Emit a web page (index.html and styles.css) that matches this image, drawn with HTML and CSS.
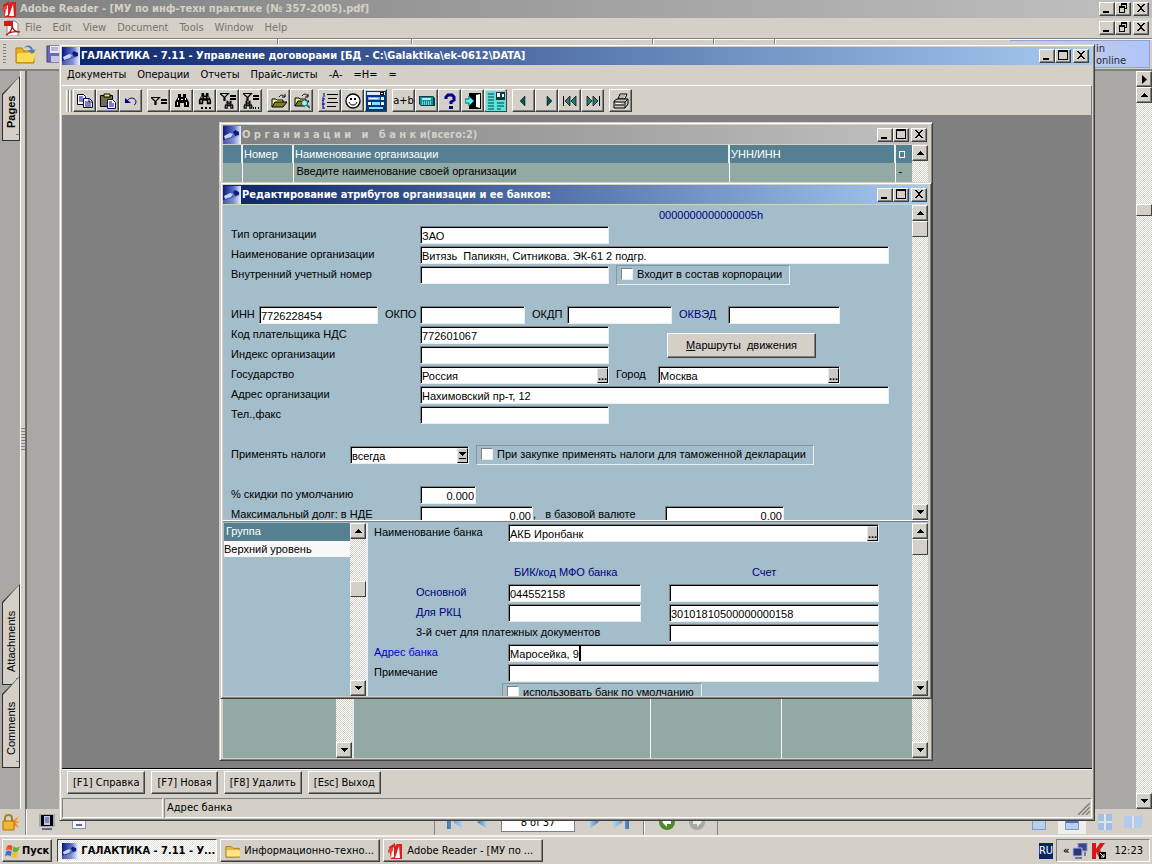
FILE: index.html
```html
<!DOCTYPE html>
<html lang="ru">
<head>
<meta charset="utf-8">
<title>ГАЛАКТИКА - 7.11 - Управление договорами</title>
<link rel="stylesheet" href="styles.css">
</head>
<body>
<svg class="sprite" aria-hidden="true">
    <defs>
        <linearGradient id="gLogo" x1="0" x2="1" y1="0" y2="0"><stop offset="0" stop-color="#0a1a80"/><stop offset=".6" stop-color="#5a70c8"/><stop offset="1" stop-color="#e8eeff"/></linearGradient>
        <linearGradient id="gNav" x1="0" x2="1"><stop offset="0" stop-color="#3b78b8"/><stop offset="1" stop-color="#b8d8f0"/></linearGradient>
    </defs>
    <symbol id="i-logo" viewBox="0 0 18 18"><rect width="18" height="18" fill="url(#gLogo)"/><path d="M1 10l6-3 3 1-2 3-6 2z" fill="#c8d4f8"/><path d="M10 6l2-2 4 2v3l-4 1z" fill="#101c78"/><path d="M0 14l18-4v8H0z" fill="#fff" opacity=".25"/></symbol>
    <symbol id="i-adobe" viewBox="0 0 16 16"><path d="M1 4l6-4v3l2-2h5v15H3z" fill="#d8201c"/><path d="M6 4v10l-3 1 1-9zM11 3L7 15h5z" fill="#fff"/><path d="M0 7l5-3v4l-5 2z" fill="#f04038"/></symbol>
    <symbol id="i-pdf" viewBox="0 0 16 16"><path d="M3 1h8l3 3v12H3z" fill="#fff" stroke="#888"/><path d="M0 1h9v5H0z" fill="#d01818"/><path d="M2 15c4-2 6-6 6-9 1 4 4 6 8 6-5-1-10 0-14 3z" fill="none" stroke="#c01010" stroke-width="1.3"/></symbol>
    <symbol id="i-min" viewBox="0 0 12 10"><path d="M2 8h6v2H2z"/></symbol>
    <symbol id="i-max" viewBox="0 0 12 10"><path d="M1 0h10v10H1zM2 2v7h8V2z" fill-rule="evenodd"/></symbol>
    <symbol id="i-restore" viewBox="0 0 12 10"><path d="M4 0h6v6H8V5h1V2H5v1H4zM2 3h6v7H2zM3 5v4h4V5z" fill-rule="evenodd"/></symbol>
    <symbol id="i-close" viewBox="0 0 12 10"><path d="M2 1h2v1h1v1h2V2h1V1h2v1H9v1H8v1H7v2h1v1h1v1h1v1H8V8H7V7H5v1H4v1H2V8h1V7h1V6h1V4H4V3H3V2H2z"/></symbol>
    <symbol id="i-up" viewBox="0 0 7 4"><path d="M3 0h1v1h1v1h1v1h1v1H0V3h1V2h1V1h1z"/></symbol>
    <symbol id="i-down" viewBox="0 0 7 4"><path d="M0 0h7v1H6v1H5v1H4v1H3V3H2V2H1V1H0z"/></symbol>
    <symbol id="i-drop" viewBox="0 0 7 7"><path d="M0 0h7v1H6v1H5v1H4v1H3V3H2V2H1V1H0zM0 6h7v1H0z"/></symbol>
    <symbol id="i-right" viewBox="0 0 5 9"><path d="M0 0l5 4.500-5 4.500z"/></symbol>
    <symbol id="i-copy" viewBox="0 0 16 16"><path d="M.5 1.500h6l2 2v8h-8z" fill="#fff" stroke="#000"/><path d="M2 4h4M2 6h4M2 8h4" stroke="#000080"/><path d="M6.500 5.500h6l3 3v6h-9z" fill="#fff" stroke="#000080"/><path d="M8 9h5M8 11h6M8 13h6M12 6v3h3" stroke="#000080" fill="none"/></symbol>
    <symbol id="i-paste" viewBox="0 0 16 16"><path d="M.5 2.500h12v11H.5z" fill="#707050" stroke="#000"/><path d="M4 1h6v3H4z" fill="#e8e880" stroke="#000"/><path d="M7.500 6.500h5l3 3v6h-8z" fill="#fff" stroke="#000080"/><path d="M9 9h3M9 11h5M9 13h5" stroke="#000080"/></symbol>
    <symbol id="i-undo" viewBox="0 0 16 16"><path d="M4 8c3-5 9-3 9 1 0 1-1 3-2 3" fill="none" stroke="#000090"/><path d="M2 5v5h6z" fill="#000090"/></symbol>
    <symbol id="g-bin" viewBox="0 0 16 16"><path d="M4 1h3v3h2V1h3v3l3 5v5h-5v-4H6v4H1V9l3-5z"/><path d="M4 5h1v2H4zM11 5h1v2h-1zM3 9h1v3H3zM12 9h1v3h-1zM7 6h2v1H7z" fill="#fff"/></symbol>
    <symbol id="g-funnel" viewBox="0 0 16 8"><path d="M0 .5h8.500L5 4v4H4V4z" fill="none" stroke="#000" stroke-width="1.200"/><path d="M10 2h6v2h-6zM10 5h6v2h-6z"/></symbol>
    <symbol id="i-filter" viewBox="0 0 16 16"><use href="#g-funnel" x="0" y="4" width="16" height="8"/></symbol>
    <symbol id="i-find" viewBox="0 0 16 16"><use href="#g-bin" width="16" height="16"/></symbol>
    <symbol id="i-findnext" viewBox="0 0 16 16"><use href="#g-bin" x="1" y="-1" width="14" height="14"/><path d="M4 14h2v2H4zM8 14h2v2H8zM12 14h2v2h-2z"/></symbol>
    <symbol id="i-ffind" viewBox="0 0 16 16"><use href="#g-funnel" width="16" height="8"/><use href="#g-bin" x="4" y="7" width="10" height="10"/></symbol>
    <symbol id="i-ffindnext" viewBox="0 0 16 16"><use href="#g-funnel" width="16" height="8"/><use href="#g-bin" x="0" y="7" width="10" height="10"/><path d="M10 14h1v2h-1zM12 14h1v2h-1zM15 14h1v2h-1z"/></symbol>
    <symbol id="i-open" viewBox="0 0 16 16"><path d="M1 14V6h4l1 1h6v3" fill="#f0f080" stroke="#000"/><path d="M1 14l3-5h12l-4 5z" fill="#808020" stroke="#000"/><path d="M8 4c2-3 4-2 6 0M14 1v3h-3" fill="none" stroke="#000"/></symbol>
    <symbol id="i-openfind" viewBox="0 0 16 16"><path d="M1 13V5h4l1 1h6v3" fill="#f0f080" stroke="#000"/><path d="M1 13l3-5h11l-4 5z" fill="#808020" stroke="#000"/><path d="M8 3c2-3 4-2 6 0M14 1v3h-3" fill="none" stroke="#000"/><circle cx="10.500" cy="10" r="3" fill="#a0f0f0" stroke="#206060"/><path d="M13 12l3 3" stroke="#008080" stroke-width="2"/></symbol>
    <symbol id="i-list" viewBox="0 0 16 16"><path d="M5 1h11v1H5zM6 5h9v1H6zM5 9h11v1H5zM5 13h9v1H5z"/><path d="M1 0h1v4M0 5h2v2H0v1h2M0 10h2v1H0M2 11v1H0M0 14h2v2H0" fill="none" stroke="#0000a0"/></symbol>
    <symbol id="i-smile" viewBox="0 0 16 16"><circle cx="8" cy="8" r="7" fill="#fff" stroke="#000" stroke-width="1.300"/><path d="M5 5h2v2H5zM9 5h2v2H9z"/><path d="M4 9c1 4 7 4 8 0" fill="none" stroke="#000"/></symbol>
    <symbol id="i-form" viewBox="0 0 20 20"><path d="M0 0h20v20H0z" fill="#003880"/><path d="M1 1h18v3H1z" fill="#d0f0ff"/><path d="M14 1h4v3h-4z" fill="#000"/><path d="M15 2h2v1h-2z" fill="#fff"/><path d="M2 6h12v3H2z" fill="#40c8f0"/><path d="M3 7h9v1H3z" fill="#fff"/><path d="M15 6h3v3h-3zM2 11h3v3H2zM15 11h3v3h-3z" fill="#fff"/><path d="M6 11h8v3H6zM3 16h14v2H3z" fill="#80e0ff"/></symbol>
    <symbol id="i-calc" viewBox="0 0 16 16"><path d="M0 3h14l2 2v8H2l-2-2z" fill="#004048"/><path d="M1 4h13v8H1z" fill="#109098"/><path d="M3 5h9v2H3z" fill="#b0f0f0"/><path d="M3 9h1M5 9h1M7 9h1M9 9h1M11 9h1M3 11h1M5 11h1M7 11h1M9 11h1M11 11h1" stroke="#e0ffff"/></symbol>
    <symbol id="i-help" viewBox="0 0 16 16"><path d="M4 6V4l2-2h4l2 2v3L9 9v2" fill="none" stroke="#000090" stroke-width="3"/><path d="M7 13h4v3H7z" fill="#000090"/></symbol>
    <symbol id="i-door" viewBox="0 0 16 16"><path d="M4 0h12v16H4z"/><path d="M11 2l4-1v14l-4-1z" fill="#fff"/><path d="M0 6h4V3l5 5-5 5v-3H0z" fill="#60f0f8" stroke="#006068"/></symbol>
    <symbol id="i-report" viewBox="0 0 20 20"><path d="M0 0h20v20H0z" fill="#60e0d8"/><path d="M2 3h6M2 6h6M2 9h6M2 12h6M2 15h6M2 18h6M11 12h7M11 15h7M11 18h4" stroke="#004048"/><path d="M10 1h9v8h-9z" fill="#103838"/><path d="M11 2h3v4h-3zM16 3h2v3h-2z" fill="#fff"/></symbol>
    <symbol id="i-prev" viewBox="0 0 16 16"><path d="M9 3v10L4 8z" fill="#005858" stroke="#000" stroke-width=".5"/></symbol>
    <symbol id="i-next" viewBox="0 0 16 16"><path d="M8 3v10l5-5z" fill="#005858" stroke="#000" stroke-width=".5"/></symbol>
    <symbol id="i-first" viewBox="0 0 16 16"><path d="M8 3v10L3 8zM14 3v10L9 8z" fill="#208078" stroke="#000" stroke-width=".7"/><path d="M1 3h1v10H1z"/></symbol>
    <symbol id="i-last" viewBox="0 0 16 16"><path d="M2 3v10l5-5zM8 3v10l5-5z" fill="#208078" stroke="#000" stroke-width=".7"/><path d="M14 3h1v10h-1z"/></symbol>
    <symbol id="i-print" viewBox="0 0 16 16"><path d="M5 6l2-5h7l-2 5z" fill="#fff" stroke="#000"/><path d="M7 3h5M6 5h5" stroke="#000" stroke-width=".6"/><path d="M1 8l3-2h11v5l-3 4H1z" fill="#c8c8c0" stroke="#000"/><path d="M1 9h11v6M12 9l3-3M2 12h9" fill="none" stroke="#000"/><path d="M3 10h5v1H3z" fill="#fff"/></symbol>
    <symbol id="i-folder" viewBox="0 0 18 16"><path d="M1 3h6l2 2h7v10H1z" fill="#e8b838" stroke="#a87818"/><path d="M2 7h15v7H2z" fill="#fde68a"/></symbol>
    <symbol id="i-bigopen" viewBox="0 0 22 20"><path d="M1 4h6l2 3h10v12H1z" fill="#e8b020" stroke="#b08010"/><path d="M2 10l3-1h16l-3 9H2z" fill="#fbdc50"/><path d="M9 4c3-4 8-3 9 2l3-1-4 5-4-4 3 0c-1-3-4-4-7-2z" fill="#4880c0"/></symbol>
    <symbol id="i-save" viewBox="0 0 18 18"><path d="M1 1h16v16H1z" fill="#6a68b8" stroke="#3c3a80"/><path d="M4 1h9v7H4z" fill="#e8e8f8"/><path d="M5 3h7M5 5h7" stroke="#8888b0"/><path d="M5 11h8v6H5z" fill="#c8c8e0"/></symbol>
    <symbol id="i-lock" viewBox="0 0 20 18"><path d="M11 9l8-6-3 5 4 1-4 1 3 5-6-3-3 4z" fill="#f89030"/><path d="M5 8V5c0-4 7-4 7 0v3" fill="none" stroke="#b08020" stroke-width="2"/><path d="M3 8h11v9H3z" fill="#f0b830" stroke="#a87010"/></symbol>
    <symbol id="i-screen" viewBox="0 0 16 16"><path d="M0 0h16v13H0z" fill="#a8a8b0"/><path d="M2 1h12v11H2z"/><path d="M5 2h6v9H5z" fill="#c0c8f0"/><path d="M6 4h4M6 6h4M6 8h4" stroke="#404880"/><path d="M3 14h10v2H3z" fill="#686870"/></symbol>
    <symbol id="i-win" viewBox="0 0 17 16"><path d="M2 3c2-2 4-2 6 0L7 8C5 6 3 6 1 8z" fill="#e8502c"/><path d="M9 3c2 2 4 2 7 0l-2 5c-2 2-4 2-6 0z" fill="#68b030"/><path d="M1 9c2-2 4-2 6 0l-1 5c-2-2-4-2-6 0z" fill="#3c70d8"/><path d="M8 9c2 2 4 2 6 0l-1 5c-2 2-4 2-6 0z" fill="#f8c020"/></symbol>
    <symbol id="i-rfirst" viewBox="0 0 16 16"><path d="M0 1h4v14H0zM16 1v14L6 8z" fill="url(#gNav)"/></symbol>
    <symbol id="i-rprev" viewBox="0 0 10 16"><path d="M10 1v14L0 8z" fill="url(#gNav)"/></symbol>
    <symbol id="i-green" viewBox="0 0 16 16"><circle cx="8" cy="8" r="8" fill="#4c8828"/><path d="M12 6v4H8v3L3 8l5-5v3z" fill="#fff"/></symbol>
    <symbol id="i-grey" viewBox="0 0 16 16"><circle cx="8" cy="8" r="8" fill="#a8a8a4"/><path d="M4 6v4h4v3l5-5-5-5v3z" fill="#e8e8e4"/></symbol>
    <symbol id="i-net" viewBox="0 0 16 16"><path d="M6 0h9v8H6z" fill="#384890" stroke="#9098c0"/><path d="M1 5h9v8H1z" fill="#283880" stroke="#b0b8d8"/><path d="M3 14h7v2H3zM12 9h2v4h-2z" fill="#787c90"/></symbol>
    <symbol id="i-kasp" viewBox="0 0 14 16"><path d="M0 0h4v6l4-6h5L8 7l5 9H8L4 9v7H0z" fill="#d81818"/><path d="M7 9h7v7H7z"/><path d="M8 10l4 4M12 11v3H9" stroke="#fff" fill="none"/></symbol>
</svg>

<div class="reader">
    <header class="titlebar inactive">
        <svg class="ico16"><use href="#i-adobe"/></svg>
        <span class="title">Adobe Reader - [МУ по инф-техн практике (№ 357-2005).pdf]</span>
        <span class="controls">
            <button class="ctl" aria-label="Minimize"><svg><use href="#i-min"/></svg></button>
            <button class="ctl" aria-label="Restore"><svg><use href="#i-restore"/></svg></button>
            <button class="ctl close" aria-label="Close"><svg><use href="#i-close"/></svg></button>
        </span>
    </header>
    <nav class="reader-menu">
        <svg class="ico16"><use href="#i-pdf"/></svg>
        <a href="#">File</a><a href="#">Edit</a><a href="#">View</a><a href="#">Document</a><a href="#">Tools</a><a href="#">Window</a><a href="#">Help</a>
        <span class="controls">
            <button class="ctl" aria-label="Minimize"><svg><use href="#i-min"/></svg></button>
            <button class="ctl" aria-label="Restore"><svg><use href="#i-restore"/></svg></button>
            <button class="ctl close" aria-label="Close"><svg><use href="#i-close"/></svg></button>
        </span>
    </nav>
    <div class="reader-tools">
        <span class="dots"></span>
        <svg class="bigopen"><use href="#i-bigopen"/></svg>
        <svg class="save"><use href="#i-save"/></svg>
        <span class="seg s1"></span><span class="seg s2"></span><span class="seg s3"></span><span class="seg s4"></span><span class="seg s4"></span>
        <a class="promo" href="#">in<br>online</a>
    </div>
    <div class="reader-main">
        <aside class="side">
            <div class="tab pages"><span>Pages</span></div>
            <div class="tab attach"><span>Attachments</span></div>
            <div class="tab comments"><span>Comments</span></div>
        </aside>
        <div class="splitter"><span class="grip"></span></div>
        <div class="doc"></div>
        <div class="scroll doc-scroll">
            <button class="sb" aria-label="Expand"><svg class="arr-r"><use href="#i-right"/></svg></button>
            <button class="sb" aria-label="Up"><svg class="arr"><use href="#i-up"/></svg></button>
            <span class="thumb short"></span>
            <button class="sb last" aria-label="Down"><svg class="arr"><use href="#i-down"/></svg></button>
        </div>
    </div>
    <footer class="reader-status">
        <div class="rs-left">
            <svg class="lock"><use href="#i-lock"/></svg>
            <span class="vsep"></span>
            <svg class="ico16 screen"><use href="#i-screen"/></svg>
            <span class="pane-ico"></span>
        </div>
        <div class="rs-nav">
            <svg class="ico16"><use href="#i-rfirst"/></svg>
            <svg class="ico10"><use href="#i-rprev"/></svg>
            <input class="page-no" value="8 of 37" aria-label="Page">
            <svg class="ico10 flip"><use href="#i-rprev"/></svg>
            <svg class="ico16 flip"><use href="#i-rfirst"/></svg>
            <span class="vsep"></span>
            <svg class="ico16"><use href="#i-green"/></svg>
            <svg class="ico16"><use href="#i-grey"/></svg>
        </div>
        <div class="rs-view">
            <span class="pg one"></span>
            <span class="pg-on"><span class="pg rows"></span></span>
            <span class="pg four"></span>
            <span class="pg two"></span>
        </div>
    </footer>
</div>

<main class="window app">
    <header class="titlebar active">
        <svg class="logo"><use href="#i-logo"/></svg>
        <span class="title">ГАЛАКТИКА - 7.11 - Управление договорами [БД - C:\Galaktika\ek-0612\DATA]</span>
        <span class="controls">
            <button class="ctl" aria-label="Свернуть"><svg><use href="#i-min"/></svg></button>
            <button class="ctl" aria-label="Развернуть"><svg><use href="#i-max"/></svg></button>
            <button class="ctl close" aria-label="Закрыть"><svg><use href="#i-close"/></svg></button>
        </span>
    </header>
    <nav class="menu">
        <a href="#">Документы</a><a href="#">Операции</a><a href="#">Отчеты</a><a href="#">Прайс-листы</a><a href="#">-А-</a><a href="#">=Н=</a><a href="#">=</a>
    </nav>
    <div class="toolbar">
        <span class="rebar"></span>
        <div class="group">
            <button aria-label="Копировать"><svg><use href="#i-copy"/></svg></button>
            <button aria-label="Вставить"><svg><use href="#i-paste"/></svg></button>
            <button aria-label="Отменить"><svg><use href="#i-undo"/></svg></button>
        </div>
        <div class="group">
            <button aria-label="Фильтр"><svg><use href="#i-filter"/></svg></button>
            <button aria-label="Поиск"><svg><use href="#i-find"/></svg></button>
            <button aria-label="Искать далее"><svg><use href="#i-findnext"/></svg></button>
            <button aria-label="Поиск по фильтру"><svg><use href="#i-ffind"/></svg></button>
            <button aria-label="Далее по фильтру"><svg><use href="#i-ffindnext"/></svg></button>
        </div>
        <div class="group">
            <button aria-label="Открыть"><svg><use href="#i-open"/></svg></button>
            <button aria-label="Просмотр"><svg><use href="#i-openfind"/></svg></button>
        </div>
        <div class="group">
            <button aria-label="Список"><svg><use href="#i-list"/></svg></button>
            <button aria-label="Пользователь"><svg><use href="#i-smile"/></svg></button>
            <button aria-label="Форма"><svg class="full"><use href="#i-form"/></svg></button>
        </div>
        <div class="group">
            <button>a+b</button>
            <button aria-label="Калькулятор"><svg><use href="#i-calc"/></svg></button>
            <button aria-label="Помощь"><svg><use href="#i-help"/></svg></button>
            <button aria-label="Выход"><svg><use href="#i-door"/></svg></button>
            <button aria-label="Отчет"><svg class="full"><use href="#i-report"/></svg></button>
        </div>
        <div class="group">
            <button aria-label="Назад"><svg><use href="#i-prev"/></svg></button>
            <button aria-label="Вперед"><svg><use href="#i-next"/></svg></button>
            <button aria-label="В начало"><svg><use href="#i-first"/></svg></button>
            <button aria-label="В конец"><svg><use href="#i-last"/></svg></button>
        </div>
        <div class="group">
            <button aria-label="Печать"><svg><use href="#i-print"/></svg></button>
        </div>
    </div>

    <div class="mdi">
        <section class="window orgs">
            <header class="titlebar inactive">
                <svg class="logo"><use href="#i-logo"/></svg>
                <span class="title">О р г а н и з а ц и и &nbsp; и &nbsp; б а н к и(всего:2)</span>
                <span class="controls">
                    <button class="ctl" aria-label="Свернуть"><svg><use href="#i-min"/></svg></button>
                    <button class="ctl" aria-label="Развернуть"><svg><use href="#i-max"/></svg></button>
                    <button class="ctl close" aria-label="Закрыть"><svg><use href="#i-close"/></svg></button>
                </span>
            </header>
            <div class="split orgs-top">
                <table class="orgs-table">
                    <colgroup><col class="c-mark"><col class="c-num"><col><col class="c-inn"><col class="c-last"></colgroup>
                    <thead><tr><th></th><th>Номер</th><th>Наименование организации</th><th>УНН/ИНН</th><th><span class="box"></span></th></tr></thead>
                    <tbody><tr><td></td><td></td><td>Введите наименование своей организации</td><td></td><td>-</td></tr></tbody>
                </table>
                <div class="scroll">
                    <button class="sb" aria-label="Вверх"><svg class="arr"><use href="#i-up"/></svg></button>
                </div>
            </div>
            <div class="split orgs-bottom">
                <div class="b-tree"></div>
                <div class="scroll"><button class="sb last" aria-label="Вниз"><svg class="arr"><use href="#i-down"/></svg></button></div>
                <div class="b-name"></div>
                <div class="b-code"></div>
                <div class="b-rest"></div>
                <div class="scroll"><button class="sb last" aria-label="Вниз"><svg class="arr"><use href="#i-down"/></svg></button></div>
            </div>
        </section>

        <section class="window edit">
            <header class="titlebar active">
                <svg class="logo"><use href="#i-logo"/></svg>
                <span class="title">Редактирование атрибутов организации и ее банков:</span>
                <span class="controls">
                    <button class="ctl" aria-label="Свернуть"><svg><use href="#i-min"/></svg></button>
                    <button class="ctl" aria-label="Развернуть"><svg><use href="#i-max"/></svg></button>
                    <button class="ctl close" aria-label="Закрыть"><svg><use href="#i-close"/></svg></button>
                </span>
            </header>
            <div class="split upper">
                <form class="form">
                    <div class="row code">0000000000000005h</div>
                    <div class="row"><label class="lab" for="type">Тип организации</label><input class="w-m" id="type" value="ЗАО"></div>
                    <div class="row"><label class="lab" for="name">Наименование организации</label><input class="w-l" id="name" value="Витязь  Папикян, Ситникова. ЭК-61 2 подгр."></div>
                    <div class="row"><label class="lab" for="inner">Внутренний учетный номер</label><input class="w-m" id="inner"><label class="frame"><input type="checkbox">Входит в состав корпорации</label></div>
                    <div class="row"></div>
                    <div class="row codes">
                        <label class="first" for="inn">ИНН</label><input class="w-inn" id="inn" value="7726228454">
                        <label for="okpo">ОКПО</label><input class="w-code" id="okpo">
                        <label for="okdp">ОКДП</label><input class="w-code" id="okdp">
                        <label class="navy" for="okved">ОКВЭД</label><input class="w-okved" id="okved">
                    </div>
                    <div class="pair">
                        <div>
                            <div class="row"><label class="lab" for="kpp">Код плательщика НДС</label><input class="w-m" id="kpp" value="772601067"></div>
                            <div class="row"><label class="lab" for="zip">Индекс организации</label><input class="w-m" id="zip"></div>
                        </div>
                        <button type="button" class="route"><u>М</u>аршруты&nbsp; движения</button>
                    </div>
                    <div class="row"><label class="lab" for="country">Государство</label><span class="field w-m"><input id="country" value="Россия"><button type="button" class="more">...</button></span><label class="city" for="city">Город</label><span class="field w-city"><input id="city" value="Москва"><button type="button" class="more">...</button></span></div>
                    <div class="row"><label class="lab" for="addr">Адрес организации</label><input class="w-l" id="addr" value="Нахимовский пр-т, 12"></div>
                    <div class="row"><label class="lab" for="tel">Тел.,факс</label><input class="w-m" id="tel"></div>
                    <div class="row"></div>
                    <div class="row"><label class="lab short" for="tax">Применять налоги</label><span class="field w-tax"><select id="tax"><option>всегда</option></select><span class="drop"><svg><use href="#i-drop"/></svg></span></span><label class="frame"><input type="checkbox">При закупке применять налоги для таможенной декларации</label></div>
                    <div class="row"></div>
                    <div class="row"><label class="lab" for="disc">% скидки по умолчанию</label><input class="w-disc num" id="disc" value="0.000"></div>
                    <div class="row"><label class="lab" for="debt">Максимальный долг: в НДЕ</label><input class="w-debt num" id="debt" value="0.00"><label class="base" for="base">,&nbsp; &nbsp;в базовой валюте</label><input class="w-base num" id="base" value="0.00"></div>
                </form>
                <div class="scroll">
                    <button class="sb" aria-label="Вверх"><svg class="arr"><use href="#i-up"/></svg></button>
                    <span class="thumb"></span>
                    <button class="sb last" aria-label="Вниз"><svg class="arr"><use href="#i-down"/></svg></button>
                </div>
            </div>
            <div class="split lower">
                <div class="groups">
                    <div class="g-head">Группа</div>
                    <div class="g-item">Верхний уровень</div>
                </div>
                <div class="scroll">
                    <button class="sb" aria-label="Вверх"><svg class="arr"><use href="#i-up"/></svg></button>
                    <span class="thumb mid"></span>
                    <button class="sb last" aria-label="Вниз"><svg class="arr"><use href="#i-down"/></svg></button>
                </div>
                <form class="bank">
                    <label for="bank">Наименование банка</label><span class="field wide"><input id="bank" value="АКБ Иронбанк"><button type="button" class="more">...</button></span>
                    <span class="all"></span>
                    <span class="navy h-bik">БИК/код МФО банка</span><span class="navy h-acc">Счет</span>
                    <label class="navy ind" for="bik1">Основной</label><input class="bik" id="bik1" value="044552158"><input aria-label="Счет">
                    <label class="navy ind" for="bik2">Для РКЦ</label><input class="bik" id="bik2"><input aria-label="Счет РКЦ" value="30101810500000000158">
                    <label class="ind third" for="acc3">3-й счет для платежных документов</label><input id="acc3">
                    <label class="blue" for="baddr">Адрес банка</label><span class="field wide text"><input id="baddr" value="Маросейка, 9"><span class="caret"></span></span>
                    <label for="note">Примечание</label><input class="wide" id="note">
                    <label class="frame def"><input type="checkbox">использовать банк по умолчанию</label>
                </form>
                <div class="scroll">
                    <button class="sb" aria-label="Вверх"><svg class="arr"><use href="#i-up"/></svg></button>
                    <span class="thumb"></span>
                    <button class="sb last" aria-label="Вниз"><svg class="arr"><use href="#i-down"/></svg></button>
                </div>
            </div>
        </section>
    </div>

    <div class="keys">
        <button>[F1] Справка</button>
        <button>[F7] Новая</button>
        <button>[F8] Удалить</button>
        <button>[Esc] Выход</button>
    </div>
    <div class="status">
        <span class="cell first"></span>
        <span class="cell">Адрес банка<svg class="resize" viewBox="0 0 12 12"><path d="M0 12L12 0M4 12l8-8M8 12l4-4" stroke="#808080" stroke-width="1.500"/></svg></span>
    </div>
</main>

<footer class="taskbar">
    <button class="start"><svg><use href="#i-win"/></svg>Пуск</button>
    <button class="task pressed"><svg><use href="#i-logo"/></svg>ГАЛАКТИКА - 7.11 - У...</button>
    <button class="task"><svg><use href="#i-folder"/></svg>Информационно-техно...</button>
    <button class="task"><svg><use href="#i-adobe"/></svg>Adobe Reader - [МУ по ...</button>
    <span class="lang">RU</span>
    <div class="tray"><b>«</b><svg><use href="#i-net"/></svg><svg><use href="#i-kasp"/></svg><time>12:23</time></div>
</footer>
</body>
</html>
```
FILE: styles.css
```css
* {
    box-sizing: border-box;
}
body {
    margin: 0;
    height: 100vh;
    min-height: 840px;
    display: flex;
    flex-direction: column;
    position: relative;
    overflow: hidden;
    background: #d4d0c8;
    color: #000;
    font: 11px/14px "DejaVu Sans Condensed", "Noto Sans", sans-serif;
}
a {
    color: inherit;
    text-decoration: none;
}
button, input, select {
    font: inherit;
    color: inherit;
    margin: 0;
    padding: 0;
    border-radius: 0;
}
button {
    background: #d4d0c8;
    border: 1px solid;
    border-color: #fff #404040 #404040 #fff;
    box-shadow: inset -1px -1px 0 #808080;
    white-space: nowrap;
}
svg {
    display: block;
    flex: none;
}
.sprite {
    position: absolute;
    width: 0;
    height: 0;
}
.ico16 {
    width: 16px;
    height: 16px;
}
.ico10 {
    width: 10px;
    height: 16px;
}
.flip {
    transform: scaleX(-1);
}

/* title bars */
.titlebar {
    display: flex;
    align-items: center;
    height: 18px;
    flex: none;
    color: #fff;
    font-weight: bold;
}
.titlebar.active {
    background: linear-gradient(90deg, #0a246a, #a6caf0);
}
.titlebar.inactive {
    background: linear-gradient(90deg, #808080, #c0c0c0);
    color: #d4d0c8;
}
.title {
    flex: 1;
    padding-left: 1px;
    white-space: nowrap;
    overflow: hidden;
}
.logo {
    width: 18px;
    height: 18px;
}
.controls {
    display: flex;
    margin-left: auto;
    padding-right: 3px;
}
.ctl {
    width: 16px;
    height: 14px;
    display: flex;
    justify-content: center;
}
.ctl.close {
    margin-left: 2px;
}
.ctl svg {
    width: 12px;
    height: 10px;
    fill: #000;
}

/* scroll bars */
.scroll {
    width: 16px;
    flex: none;
    display: flex;
    flex-direction: column;
    background: repeating-conic-gradient(#fff 0 25%, #d4d0c8 0 50%) 0 0 / 2px 2px;
}
.sb, .thumb {
    height: 16px;
    flex: none;
    display: flex;
    align-items: center;
    justify-content: center;
}
.thumb {
    background: #d4d0c8;
    border: 1px solid;
    border-color: #fff #404040 #404040 #fff;
}
.sb.last {
    margin-top: auto;
}
.arr {
    width: 7px;
    height: 4px;
}
.arr-r {
    width: 5px;
    height: 9px;
}

/* reader in the background */
.reader {
    flex: 1;
    display: flex;
    flex-direction: column;
    min-height: 0;
}
.reader > .titlebar {
    padding-left: 2px;
    gap: 1px;
}
.reader-menu {
    height: 20px;
    display: flex;
    align-items: center;
    gap: 11px;
    padding-left: 4px;
    color: #77746e;
}
.reader-menu .ico16 {
    margin-right: -6px;
}
.reader-tools {
    height: 33px;
    display: flex;
    align-items: center;
    gap: 9px;
    padding: 0 2px 0 3px;
    border-top: 1px solid #808080;
    border-bottom: 2px solid #808080;
    box-shadow: inset 0 1px 0 #fff;
}
.dots {
    width: 3px;
    height: 20px;
    background: repeating-linear-gradient(#808080 0 1px, transparent 1px 3px);
}
.bigopen {
    width: 22px;
    height: 20px;
}
.save {
    width: 18px;
    height: 18px;
}
.seg {
    height: 100%;
    margin-left: -9px;
    border-right: 1px solid #808080;
    box-shadow: 1px 0 0 #fff;
}
.s1 {
    width: 214px;
}
.s2 {
    width: 134px;
}
.s3 {
    width: 241px;
}
.s4 {
    width: 61px;
}
.promo {
    margin-left: auto;
    width: 140px;
    height: 28px;
    padding: 2px 0 0 86px;
    background: linear-gradient(90deg, #d4d0c8, #b0c4fc);
    border: 1px solid #8ea4d8;
    border-left: 0;
    line-height: 12px;
    color: #202838;
}
.reader-main {
    flex: 1;
    display: flex;
    min-height: 0;
}
.side {
    width: 20px;
    padding: 5px 0 41px 2px;
    display: flex;
    flex-direction: column;
    background: #aaa8a4;
}
.tab {
    width: 18px;
    padding: 1px 0 1px 1px;
    background: #303030;
    clip-path: polygon(0 18px, 100% 0, 100% 100%, 0 100%);
}
.tab span {
    display: block;
    height: 100%;
    padding-top: 12px;
    background: linear-gradient(#808080 0 1px, transparent 1px) 0 5px / 3px 100% no-repeat, #d4d0c8;
    clip-path: polygon(0 0, 100% 0, 100% calc(100% - 18px), 0 100%);
    writing-mode: vertical-rl;
    transform: rotate(180deg);
    font: 11px/16px "Liberation Sans", sans-serif;
}
.tab.pages {
    height: 65px;
}
.tab.pages span {
    font-weight: bold;
}
.tab.attach {
    height: 101px;
    margin-top: auto;
}
.tab.comments {
    height: 92px;
    margin-top: -9px;
}
.splitter {
    width: 7px;
    display: flex;
    align-items: center;
    background: #d4d0c8;
    border-left: 1px solid #fff;
    border-right: 2px solid #686868;
}
.grip {
    width: 4px;
    height: 24px;
    background: repeating-linear-gradient(#808080 0 1px, transparent 1px 3px);
}
.doc {
    flex: 1;
    background: #aaa8a4;
}
.thumb.short {
    height: 12px;
    margin-top: 101px;
}
.reader-status {
    height: 26px;
    display: grid;
    grid-template-columns: 1fr auto 1fr;
    align-items: center;
}
.rs-left, .rs-nav, .rs-view {
    display: flex;
    align-items: center;
}
.lock {
    width: 20px;
    height: 18px;
}
.vsep {
    width: 2px;
    height: 26px;
    border-left: 1px solid #808080;
    border-right: 1px solid #fff;
}
.rs-left .vsep {
    margin: 0 12px 0 5px;
}
.pane-ico {
    width: 14px;
    height: 14px;
    margin-left: 17px;
    background: linear-gradient(90deg, transparent 3px, #5868a0 3px 9px, transparent 9px) 0 8px / 100% 2px no-repeat, #f4f4fa;
    border: 1px solid #8890b0;
}
.rs-nav {
    gap: 14px;
    padding: 0 12px;
    border-left: 1px solid #808080;
    border-right: 1px solid #808080;
}
.page-no {
    width: 74px;
    height: 20px;
    border: 1px solid #808080;
    background: #fff;
    text-align: center;
}
.rs-view {
    justify-content: flex-end;
    gap: 12px;
    padding-right: 10px;
}
.pg {
    display: block;
    width: 14px;
    height: 16px;
    background: #b8d0ee;
    border: 1px solid #7c9cc8;
}
.pg-on {
    padding: 4px 7px;
    background: #f0eeea;
}
.pg.rows {
    background: linear-gradient(#b8d0ee 0 5px, #4878b8 5px 8px, #b8d0ee 8px);
}
.pg.four, .pg.two {
    border: 0;
}
.pg.four {
    background: linear-gradient(90deg, transparent 6px, #e4e2dc 6px 8px, transparent 8px), linear-gradient(#a0c0e8 7px, #e4e2dc 7px 9px, #a0c0e8 9px);
}
.pg.two {
    width: 18px;
    height: 12px;
    background: linear-gradient(90deg, #b4ccec 8px, #e4e2dc 8px 10px, #b4ccec 10px);
}

/* windows */
.window {
    display: flex;
    flex-direction: column;
    background: #d4d0c8;
    border: 1px solid;
    border-color: #d4d0c8 #404040 #404040 #d4d0c8;
    box-shadow: inset 1px 1px 0 #fff, inset -1px -1px 0 #808080;
    padding: 2px;
}
.app {
    position: absolute;
    top: 44px;
    right: 57px;
    bottom: 43px;
    left: 59px;
}
.menu {
    height: 20px;
    display: flex;
    align-items: center;
    gap: 11px;
    padding-left: 5px;
}
.toolbar {
    height: 30px;
    display: flex;
    align-items: center;
    gap: 5px;
    padding-left: 4px;
    border-top: 1px solid #fff;
    border-right: 1px solid #808080;
}
.rebar {
    width: 6px;
    height: 22px;
    margin-right: -4px;
    background: linear-gradient(90deg, #fff 0 1px, transparent 1px 2px, #808080 2px 3px, #fff 3px 4px, transparent 4px 5px, #808080 5px);
}
.group {
    display: flex;
}
.toolbar button {
    width: 23px;
    height: 23px;
    display: flex;
    align-items: center;
    justify-content: center;
}
.toolbar svg {
    width: 16px;
    height: 16px;
}
.toolbar svg.full {
    width: 20px;
    height: 20px;
}
.mdi {
    flex: 1;
    min-height: 0;
    position: relative;
    overflow: hidden;
    background: #808080;
    border-bottom: 1px solid #000;
}
.keys {
    display: flex;
    gap: 6px;
    padding: 1px 5px 4px;
    border-top: 1px solid #fff;
}
.keys button {
    height: 23px;
    padding: 0 5px;
}
.status {
    display: flex;
    gap: 1px;
}
.cell {
    flex: 1;
    display: flex;
    justify-content: space-between;
    align-items: flex-end;
    height: 20px;
    padding: 2px 1px 2px 2px;
    border: 1px solid;
    border-color: #808080 #fff #fff #808080;
}
.cell.first {
    flex: none;
    width: 101px;
}
.resize {
    width: 12px;
    height: 12px;
}

/* child windows */
.mdi .titlebar {
    height: 19px;
    margin-bottom: 1px;
}
.mdi .controls {
    padding-right: 1px;
}
.orgs {
    position: absolute;
    top: 7px;
    left: 157px;
    width: 714px;
    height: 639px;
    padding: 2px 4px 2px 3px;
    font: 11px/14px "Liberation Sans", sans-serif;
}
.edit {
    position: absolute;
    top: 67px;
    left: 158px;
    width: 712px;
    height: 517px;
    padding: 2px 3px 2px 2px;
    font: 11px/14px "Liberation Sans", sans-serif;
}
.mdi .title {
    font-family: "DejaVu Sans Condensed", "Noto Sans", sans-serif;
}
.split {
    display: flex;
    min-height: 0;
}
.orgs-top {
    height: 37px;
}
.orgs-table {
    flex: 1;
    border-collapse: collapse;
    table-layout: fixed;
    background: #92a9a4;
}
.orgs-table th {
    height: 18px;
    padding: 0 1px;
    background: #558092;
    border-left: 2px solid #e8f0f0;
    color: #fff;
    font-weight: normal;
    text-align: left;
}
.orgs-table td {
    height: 19px;
    padding: 0 3px 3px;
    border-left: 1px solid #fff;
}
.orgs-table tr > :first-child {
    border-left: 0;
}
.c-mark {
    width: 19px;
}
.c-num {
    width: 51px;
}
.c-inn {
    width: 166px;
}
.c-last {
    width: 17px;
}
.box {
    display: block;
    width: 6px;
    height: 7px;
    margin-left: 2px;
    border: 1px solid #fff;
}
.orgs-bottom {
    flex: 1;
    background: #92a9a4;
}
.b-tree {
    width: 113px;
}
.b-name {
    flex: 1;
    border-left: 2px solid #e0e8e8;
}
.b-code, .b-rest {
    width: 131px;
    border-left: 1px solid #fff;
}
.upper {
    height: 316px;
    background: #a3bdca;
    border-bottom: 1px solid #fff;
}
.form {
    flex: 1;
    overflow: hidden;
    padding-left: 8px;
}
.row {
    height: 20px;
    display: flex;
    align-items: center;
    white-space: nowrap;
}
.row.code {
    padding-left: 428px;
    color: #000080;
}
.row > label, .bank > label {
    padding-bottom: 2px;
}
.lab {
    width: 189px;
    flex: none;
}
.lab.short {
    width: 119px;
}
.navy {
    color: #000080;
}
.blue {
    color: #0000d0;
}
.form input, .bank input, .field {
    height: 18px;
    background: #fff;
    border: 1px solid;
    border-color: #808080 #e8eef2 #e8eef2 #808080;
    box-shadow: inset 1px 1px 0 #000;
    padding: 1px 0 0 1px;
}
.field {
    display: flex;
}
.form .field input, .bank .field input, .field select {
    flex: 1;
    min-width: 0;
    width: 0;
    height: 15px;
    border: 0;
    box-shadow: none;
    background: none;
    padding: 0;
    appearance: none;
}
.more, .drop {
    width: 11px;
    height: 15px;
    line-height: 8px;
    background: #c8c8c8;
    border: 1px solid;
    border-color: #e8e8e8 #000 #000 #e8e8e8;
    box-shadow: none;
    font-weight: bold;
}
.drop {
    display: flex;
    align-items: center;
    justify-content: center;
}
.drop svg {
    width: 7px;
    height: 7px;
}
.form .num {
    text-align: right;
    padding-right: 1px;
}
.w-m {
    width: 189px;
}
.w-l {
    width: 469px;
}
.w-inn, .w-tax {
    width: 119px;
}
.w-code {
    width: 105px;
}
.w-okved {
    width: 112px;
}
.w-city {
    width: 182px;
}
.w-disc {
    width: 56px;
}
.w-debt {
    width: 113px;
}
.w-base {
    width: 119px;
}
.codes label {
    width: 35px;
    margin-left: 7px;
    flex: none;
}
.codes label.first {
    width: 28px;
    margin-left: 0;
}
.codes label.navy {
    width: 49px;
}
.frame {
    height: 20px;
    display: flex;
    align-items: center;
    gap: 4px;
    margin-left: 7px;
    padding: 0 7px 0 4px;
    border: 1px solid;
    border-color: #8496a0 #e8eef2 #e8eef2 #8496a0;
    white-space: nowrap;
}
.form .frame input, .bank .frame input {
    appearance: none;
    width: 12px;
    height: 12px;
    padding: 0;
    box-shadow: none;
}
.pair {
    display: flex;
    align-items: center;
    gap: 58px;
}
.route {
    width: 149px;
    height: 25px;
}
.city {
    width: 49px;
    padding-left: 7px;
}
.base {
    width: 132px;
}
.lower {
    flex: 1;
    padding-top: 1px;
    background: #a3bdca;
    border-top: 1px solid #808080;
}
.groups {
    width: 127px;
    padding-left: 1px;
}
.g-head {
    height: 18px;
    padding: 1px 2px;
    background: #558092;
    color: #fff;
}
.g-item {
    height: 16px;
    padding-top: 1px;
    background: #f8f8f8;
}
.thumb.mid {
    margin: auto 0;
}
.bank {
    flex: 1;
    overflow: hidden;
    display: grid;
    grid-template-columns: 134px 161px 210px;
    grid-auto-rows: 20px;
    align-items: center;
    padding-left: 6px;
    border-left: 2px solid #e8eef2;
    white-space: nowrap;
}
.bank .wide {
    grid-column: 2 / 4;
    width: 371px;
}
.bank .bik {
    width: 133px;
}
.all {
    grid-column: 1 / 4;
}
.h-bik {
    grid-column: 2;
    padding: 0 0 2px 6px;
}
.h-acc {
    padding: 0 0 2px 83px;
}
.ind {
    padding-left: 42px;
}
.third {
    grid-column: 1 / 3;
}
.bank .text input {
    flex: none;
    width: auto;
    field-sizing: content;
}
.caret {
    width: 2px;
    background: #000;
}
.frame.def {
    grid-column: 1 / 4;
    justify-self: start;
    margin-left: 128px;
}

/* task bar */
.taskbar {
    height: 29px;
    flex: none;
    display: flex;
    align-items: center;
    gap: 3px;
    padding: 0 2px;
    border-top: 2px solid #f4f2ee;
}
.taskbar button {
    height: 23px;
    display: flex;
    align-items: center;
    gap: 3px;
    padding: 0 4px;
    overflow: hidden;
}
.taskbar svg {
    width: 16px;
    height: 16px;
}
.start {
    font-weight: bold;
    margin-right: 2px;
}
.taskbar .start {
    padding: 0 2px;
    gap: 1px;
}
.task {
    flex: 0 1 160px;
}
.task.pressed {
    font-weight: bold;
    background: repeating-conic-gradient(#fff 0 25%, #e4e2dc 0 50%) 0 0 / 2px 2px;
    border-color: #404040 #fff #fff #404040;
    box-shadow: none;
}
.lang {
    margin-left: auto;
    padding: 1px 0;
    background: #0a246a;
    color: #fff;
}
.tray {
    height: 23px;
    display: flex;
    align-items: center;
    gap: 3px;
    padding: 0 6px;
    border: 1px solid;
    border-color: #808080 #fff #fff #808080;
}
.tray time {
    margin-left: 4px;
}
```
